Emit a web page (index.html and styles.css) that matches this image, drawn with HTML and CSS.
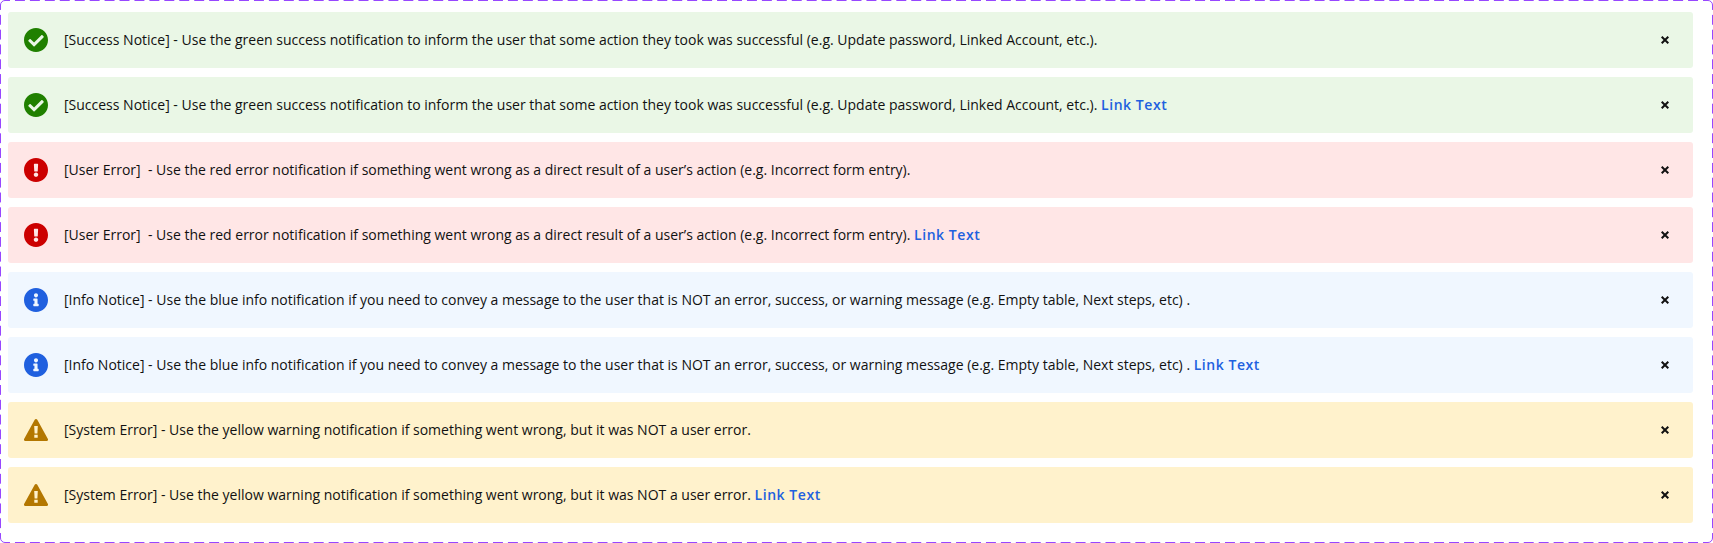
FILE: index.html
```html
<!DOCTYPE html>
<html lang="en">
<head>
    <meta charset="UTF-8">
    <title>Notifications</title>
    <link rel="stylesheet" href="styles.css">
</head>
<body>

<!-- Shared icons -->
<svg class="sprite" aria-hidden="true">
    <symbol id="icon-success" viewBox="8 8 496 496">
        <path d="M504 256c0 136.967-111.033 248-248 248S8 392.967 8 256 119.033 8 256 8s248 111.033 248 248zM227.314 387.314l184-184c6.248-6.248 6.248-16.379 0-22.627l-22.627-22.627c-6.248-6.249-16.379-6.249-22.628 0L216 308.118l-70.059-70.059c-6.248-6.248-16.379-6.248-22.628 0l-22.627 22.627c-6.248 6.248-6.248 16.379 0 22.627l104 104c6.249 6.249 16.379 6.249 22.628.001z"/>
    </symbol>
    <symbol id="icon-error" viewBox="8 8 496 496">
        <path d="M504 256c0 136.997-111.043 248-248 248S8 392.997 8 256C8 119.083 119.043 8 256 8s248 111.083 248 248zm-248 50c-25.405 0-46 20.595-46 46s20.595 46 46 46 46-20.595 46-46-20.595-46-46-46zm-43.673-165.346l7.418 136c.347 6.364 5.609 11.346 11.982 11.346h48.546c6.373 0 11.635-4.982 11.982-11.346l7.418-136c.375-6.874-5.098-12.654-11.982-12.654h-63.383c-6.884 0-12.356 5.78-11.981 12.654z"/>
    </symbol>
    <symbol id="icon-info" viewBox="8 8 496 496">
        <path d="M256 8C119.043 8 8 119.083 8 256c0 136.997 111.043 248 248 248s248-111.003 248-248C504 119.083 392.957 8 256 8zm0 110c23.196 0 42 18.804 42 42s-18.804 42-42 42-42-18.804-42-42 18.804-42 42-42zm56 254c0 6.627-5.373 12-12 12h-88c-6.627 0-12-5.373-12-12v-24c0-6.627 5.373-12 12-12h12v-64h-12c-6.627 0-12-5.373-12-12v-24c0-6.627 5.373-12 12-12h64c6.627 0 12 5.373 12 12v100h12c6.627 0 12 5.373 12 12v24z"/>
    </symbol>
    <symbol id="icon-warning" viewBox="0 0 24 24">
        <path d="M10.7 1.7 0.1 21A1.3 1.3 0 0 0 1.3 23H22.7A1.3 1.3 0 0 0 23.9 21L13.3 1.7A1.5 1.5 0 0 0 10.7 1.7Z"/>
        <path class="mark" d="M10.2 8h3.6l-.4 7.6h-2.8zM10.3 16.7h3.4v3.1h-3.4z"/>
    </symbol>
    <symbol id="icon-close" viewBox="0 0 8 8">
        <path d="M0.7 0.7 7.3 7.3M7.3 0.7 0.7 7.3"/>
    </symbol>
</svg>

<div class="board">
    <svg class="outline" viewBox="0 0 1713 543" aria-hidden="true">
        <path class="side" pathLength="1710" d="M5 0.5H1708"/>
        <path class="side" pathLength="540" d="M1712.5 5V538"/>
        <path class="side" pathLength="1710" d="M5 542.5H1708"/>
        <path class="side" pathLength="540" d="M0.5 5V538"/>
        <path d="M0.5 5A4.5 4.5 0 0 1 5 0.5M1708 0.5A4.5 4.5 0 0 1 1712.5 5M1712.5 538A4.5 4.5 0 0 1 1708 542.5M5 542.5A4.5 4.5 0 0 1 0.5 538"/>
    </svg>

    <div class="notice success">
        <svg class="icon"><use href="#icon-success"/></svg>
        <p>[Success Notice] - Use the green success notification to inform the user that some action they took was successful (e.g. Update password, Linked Account, etc.).</p>
        <button class="close" aria-label="Close"><svg><use href="#icon-close"/></svg></button>
    </div>

    <div class="notice success">
        <svg class="icon"><use href="#icon-success"/></svg>
        <p>[Success Notice] - Use the green success notification to inform the user that some action they took was successful (e.g. Update password, Linked Account, etc.). <a href="#">Link Text</a></p>
        <button class="close" aria-label="Close"><svg><use href="#icon-close"/></svg></button>
    </div>

    <div class="notice error">
        <svg class="icon"><use href="#icon-error"/></svg>
        <p>[User Error] &nbsp;- Use the red error notification if something went wrong as a direct result of a user’s action (e.g. Incorrect form entry).</p>
        <button class="close" aria-label="Close"><svg><use href="#icon-close"/></svg></button>
    </div>

    <div class="notice error">
        <svg class="icon"><use href="#icon-error"/></svg>
        <p>[User Error] &nbsp;- Use the red error notification if something went wrong as a direct result of a user’s action (e.g. Incorrect form entry). <a href="#">Link Text</a></p>
        <button class="close" aria-label="Close"><svg><use href="#icon-close"/></svg></button>
    </div>

    <div class="notice info">
        <svg class="icon"><use href="#icon-info"/></svg>
        <p>[Info Notice] - Use the blue info notification if you need to convey a message to the user that is NOT an error, success, or warning message (e.g. Empty table, Next steps, etc) .</p>
        <button class="close" aria-label="Close"><svg><use href="#icon-close"/></svg></button>
    </div>

    <div class="notice info">
        <svg class="icon"><use href="#icon-info"/></svg>
        <p>[Info Notice] - Use the blue info notification if you need to convey a message to the user that is NOT an error, success, or warning message (e.g. Empty table, Next steps, etc) . <a href="#">Link Text</a></p>
        <button class="close" aria-label="Close"><svg><use href="#icon-close"/></svg></button>
    </div>

    <div class="notice warning">
        <svg class="icon"><use href="#icon-warning"/></svg>
        <p>[System Error] - Use the yellow warning notification if something went wrong, but it was NOT a user error.</p>
        <button class="close" aria-label="Close"><svg><use href="#icon-close"/></svg></button>
    </div>

    <div class="notice warning">
        <svg class="icon"><use href="#icon-warning"/></svg>
        <p>[System Error] - Use the yellow warning notification if something went wrong, but it was NOT a user error. <a href="#">Link Text</a></p>
        <button class="close" aria-label="Close"><svg><use href="#icon-close"/></svg></button>
    </div>
</div>

</body>
</html>
```
FILE: styles.css
```css
body {
    margin: 0;
    background: white;
    font-family: "Open Sans", sans-serif;
    font-size: 14px;
    line-height: 24px;
    color: #111;
}
.sprite {
    display: none;
}
.board {
    position: relative;
    display: flex;
    flex-direction: column;
    gap: 9px;
    height: 543px;
    padding: 12px 20px 0 8px;
    box-sizing: border-box;
}
.outline {
    position: absolute;
    top: 0;
    left: 0;
    width: 100%;
    height: 100%;
    fill: none;
    stroke: #9747ff;
    stroke-width: 1;
    pointer-events: none;
}
/* starts and ends each side on half a dash so the corners join up */
.outline .side {
    stroke-dasharray: 10 5;
    stroke-dashoffset: 5;
}
.notice {
    display: flex;
    align-items: center;
    gap: 16px;
    height: 56px;
    padding: 0 24px 0 16px;
    box-sizing: border-box;
    border-radius: 3px;
}
.notice p {
    flex: 1;
    margin: 0;
    white-space: nowrap;
}
.notice a {
    color: #2060df;
    font-weight: 600;
    letter-spacing: 0.55px;
    text-decoration: none;
}
.icon {
    width: 24px;
    height: 24px;
    fill: currentColor;
}
.icon,
.close {
    flex-shrink: 0;
}
.success {
    background: #eaf7e6;
}
.success .icon {
    color: #208000;
}
.error {
    background: #ffe6e6;
}
.error .icon {
    color: #cc0000;
}
.info {
    background: #f0f7ff;
}
.info .icon {
    color: #2060df;
}
.warning {
    background: #fff2cc;
}
.warning .icon {
    color: #b37700;
}
.mark {
    fill: #fff2cc;
}
.close {
    display: flex;
    padding: 0;
    border: none;
    background: none;
    cursor: pointer;
}
.close svg {
    width: 8px;
    height: 8px;
    fill: none;
    stroke: #111;
    stroke-width: 2;
}
```
